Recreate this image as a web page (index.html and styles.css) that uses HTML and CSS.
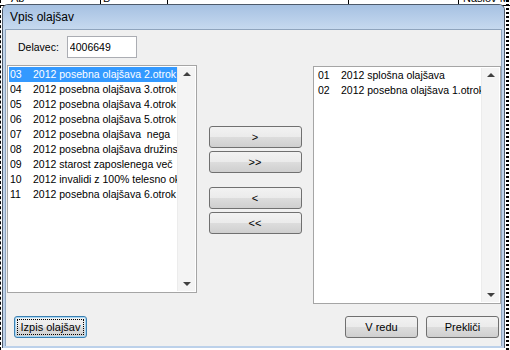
FILE: index.html
```html
<!DOCTYPE html>
<html lang="en">
<head>
    <meta charset="UTF-8">
    <title>Vpis olajšav</title>
    <link rel="stylesheet" href="styles.css">
</head>
<body>
    <div class="sheet">
        <div class="sheet-head">
            <div class="cell c1"><span>Ab</span></div>
            <div class="cell c2"><span>B</span></div>
            <div class="cell c3"><span></span></div>
            <div class="cell c4"><span></span></div>
            <div class="cell c5"><span>Naslov M</span></div>
        </div>
        <div class="sheet-edge"></div>
    </div>

    <div class="dialog">
        <div class="titlebar">Vpis olajšav</div>
        <div class="client">
            <div class="worker-row">
                <label for="worker">Delavec:</label>
                <input id="worker" class="text-input" type="text" value="4006649">
            </div>

            <div class="lists">
                <div class="listbox left-list">
                    <div class="list-items">
                        <div class="item selected"><span class="code">03</span>2012 posebna olajšava 2.otrok</div>
                        <div class="item"><span class="code">04</span>2012 posebna olajšava 3.otrok</div>
                        <div class="item"><span class="code">05</span>2012 posebna olajšava 4.otrok</div>
                        <div class="item"><span class="code">06</span>2012 posebna olajšava 5.otrok</div>
                        <div class="item"><span class="code">07</span>2012 posebna olajšava&nbsp; nega</div>
                        <div class="item"><span class="code">08</span>2012 posebna olajšava družinski</div>
                        <div class="item"><span class="code">09</span>2012 starost zaposlenega več</div>
                        <div class="item"><span class="code">10</span>2012 invalidi z 100% telesno okvaro</div>
                        <div class="item"><span class="code">11</span>2012 posebna olajšava 6.otrok</div>
                    </div>
                    <div class="scrollbar">
                        <span class="arrow up"></span>
                        <span class="arrow down"></span>
                    </div>
                </div>

                <div class="move-buttons">
                    <button class="btn move">&gt;</button>
                    <button class="btn move">&gt;&gt;</button>
                    <button class="btn move group-gap">&lt;</button>
                    <button class="btn move">&lt;&lt;</button>
                </div>

                <div class="listbox right-list">
                    <div class="list-items">
                        <div class="item"><span class="code">01</span>2012 splošna olajšava</div>
                        <div class="item"><span class="code">02</span>2012 posebna olajšava 1.otrok</div>
                    </div>
                    <div class="scrollbar">
                        <span class="arrow up"></span>
                        <span class="arrow down"></span>
                    </div>
                </div>
            </div>

            <div class="bottom-row">
                <button class="btn focused"><span class="focus-rect">Izpis olajšav</span></button>
                <div class="dialog-buttons">
                    <button class="btn">V redu</button>
                    <button class="btn">Prekliči</button>
                </div>
            </div>
        </div>
    </div>
</body>
</html>
```

FILE: styles.css
```css
body {
    margin: 0;
    width: 510px;
    height: 350px;
    overflow: hidden;
    background-color: white;
    font-family: 'Liberation Sans', Arial, sans-serif;
    font-size: 10.5px;
    color: #000;
}
.sheet {
    height: 350px;
    border-left: 1px dashed #000;
    position: relative;
}
.sheet-head {
    display: flex;
    height: 5px;
    border-bottom: 1px solid #000;
    overflow: hidden;
}
.cell {
    border-right: 1px solid #000;
    height: 5px;
    overflow: hidden;
    padding-left: 10px;
    font-size: 11px;
}
.cell span {
    display: block;
    margin-top: -8px;
}
.c1 { width: 89px; }
.c2 { width: 64px; padding-left: 2px; }
.c3 { width: 170px; }
.c4 { width: 99px; }
.c5 { flex: 1; padding-left: 4px; border-right: none; }
.sheet-edge {
    position: absolute;
    right: 1px;
    top: 0;
    width: 3px;
    height: 350px;
    background: repeating-linear-gradient(to bottom, #000 0, #000 2px, transparent 2px, transparent 4px);
}

/* dialog window */
.dialog {
    position: absolute;
    left: 2px;
    top: 4px;
    width: 503px;
    height: 344px;
    box-sizing: border-box;
    border: 1px solid #4d5a6a;
    border-bottom: none;
    border-radius: 6px 6px 0 0;
    background: linear-gradient(#c2d6ed, #bcd1ea);
    padding: 0 2px 2px 2px;
    display: flex;
    flex-direction: column;
}
.titlebar {
    height: 24px;
    line-height: 24px;
    font-size: 12px;
    color: #000;
    background: linear-gradient(#a6c1e2, #c6d9ef);
    margin: 0 -2px;
    border-radius: 5px 5px 0 0;
    padding-left: 7px;
}
.client {
    flex: 1;
    background-color: #f0f0f0;
    border: 1px solid #8fa4bd;
    border-bottom: none;
    padding: 6px 0 0 1px;
    display: flex;
    flex-direction: column;
}
.worker-row {
    display: flex;
    align-items: center;
    gap: 8px;
    padding-left: 11px;
    height: 22px;
}
.text-input {
    width: 70px;
    height: 22px;
    box-sizing: border-box;
    border: 1px solid #abadb3;
    font-family: inherit;
    font-size: 10.5px;
    padding: 0 2px;
    margin: 0;
}
.lists {
    display: grid;
    grid-template-columns: 190px 1fr 188px;
    align-items: start;
    margin-top: 7px;
}
.listbox {
    background-color: white;
    border: 1px solid #a5a5a5;
    display: flex;
    box-sizing: border-box;
    padding: 1px;
    overflow: hidden;
}
.left-list {
    height: 228px;
}
.right-list {
    height: 238px;
    margin-top: 1px;
}
.list-items {
    flex: 1;
    min-width: 0;
    overflow: hidden;
}
.item {
    height: 15px;
    line-height: 15px;
    white-space: nowrap;
    padding-left: 1px;
    overflow: hidden;
}
.right-list .item {
    padding-left: 3px;
}
.item.selected {
    background-color: #3399ff;
    color: white;
}
.code {
    display: inline-block;
    width: 23px;
}
.scrollbar {
    width: 17px;
    flex-shrink: 0;
    background-color: #f4f4f4;
    border-left: 1px solid #ececec;
    display: flex;
    flex-direction: column;
    justify-content: space-between;
    align-items: center;
    padding: 5px 0;
}
.arrow {
    width: 0;
    height: 0;
    border-left: 4px solid transparent;
    border-right: 4px solid transparent;
}
.arrow.up {
    border-bottom: 4px solid #404040;
}
.arrow.down {
    border-top: 4px solid #404040;
}
.move-buttons {
    display: flex;
    flex-direction: column;
    align-items: center;
    gap: 3px;
    margin-top: 61px;
}
.btn {
    height: 22px;
    box-sizing: border-box;
    border: 1px solid #707070;
    border-radius: 3px;
    background: linear-gradient(#f2f2f2 0%, #ebebeb 49%, #dddddd 50%, #cfcfcf 100%);
    font-family: inherit;
    font-size: 11px;
    color: #000;
    padding: 0;
    margin: 0;
}
.btn.move {
    width: 93px;
}
.btn.group-gap {
    margin-top: 11px;
}
.bottom-row {
    display: flex;
    justify-content: space-between;
    align-items: center;
    margin-top: 12px;
    padding-left: 7px;
    padding-right: 2px;
}
.bottom-row .btn {
    width: 73px;
}
.btn.focused {
    border-color: #3c7fb1;
    box-shadow: inset 0 0 0 1px #a5d7f5;
    padding: 2px;
    margin-top: -1px;
}
.focus-rect {
    display: block;
    height: 100%;
    box-sizing: border-box;
    border: 1px dotted #000;
    line-height: 14px;
}
.dialog-buttons {
    display: flex;
    gap: 8px;
}
```
